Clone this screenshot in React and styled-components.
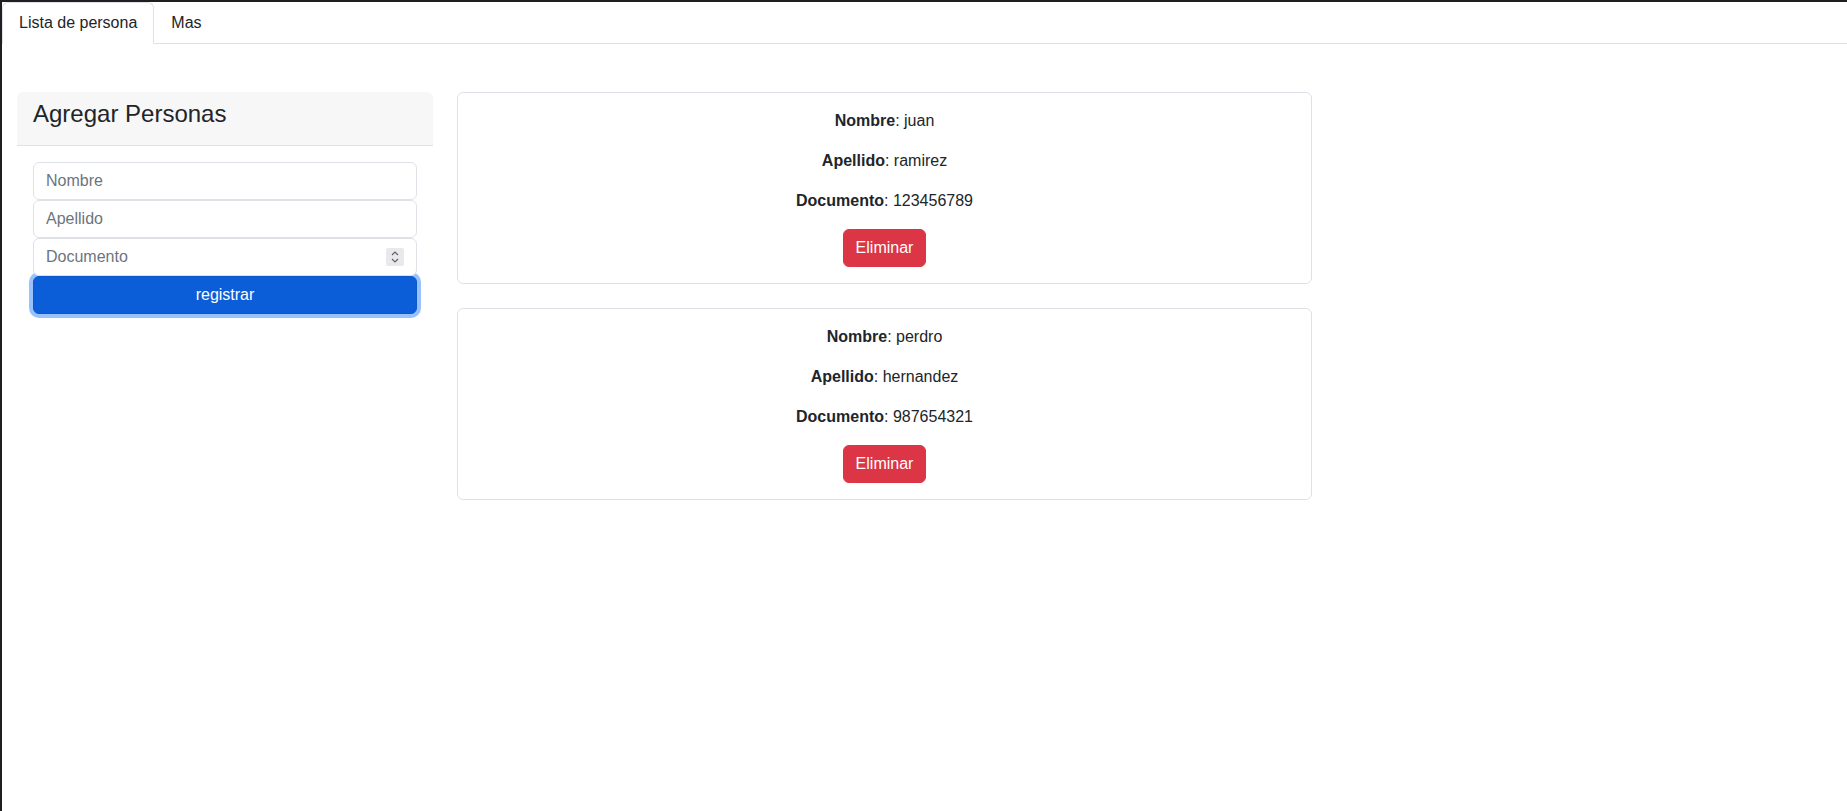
import styled, { createGlobalStyle } from 'styled-components'

const GlobalStyle = createGlobalStyle`
  * { box-sizing: border-box; }
  body {
    margin: 0;
    font-family: "Liberation Sans", Arial, sans-serif;
    font-size: 16px;
    line-height: 1.5;
    color: #212529;
    background: #fff;
    border-top: 2px solid #1f1f1f;
    border-left: 2px solid #1f1f1f;
    min-height: 811px;
  }
`

const personas = [
  { nombre: 'juan', apellido: 'ramirez', documento: '123456789' },
  { nombre: 'perdro', apellido: 'hernandez', documento: '987654321' },
]

const App = () => {
  return (
    <>
      <GlobalStyle />
      <NavTabs>
        <Tab active>Lista de persona</Tab>
        <Tab>Mas</Tab>
      </NavTabs>
      <Content>
        <FormCard>
          <CardHeader>
            <h4>Agregar Personas</h4>
          </CardHeader>
          <FormBody>
            <Input type="text" placeholder="Nombre" />
            <Input type="text" placeholder="Apellido" />
            <NumberWrap>
              <Input type="number" placeholder="Documento" />
              <Spinner>
                <svg width="10" height="14" viewBox="0 0 10 14" fill="none" stroke="#5f6368" strokeWidth="1.2">
                  <path d="M2 5 L5 2 L8 5" />
                  <path d="M2 9 L5 12 L8 9" />
                </svg>
              </Spinner>
            </NumberWrap>
            <PrimaryButton>registrar</PrimaryButton>
          </FormBody>
        </FormCard>
        <List>
          {personas.map((p) => (
            <PersonCard key={p.documento}>
              <p><b>Nombre</b>: {p.nombre}</p>
              <p><b>Apellido</b>: {p.apellido}</p>
              <p><b>Documento</b>: {p.documento}</p>
              <DangerButton>Eliminar</DangerButton>
            </PersonCard>
          ))}
        </List>
      </Content>
    </>
  )
}

export default App

const NavTabs = styled.div`
  display: flex;
  border-bottom: 1px solid #dee2e6;
`

const Tab = styled.div`
  padding: 8px 16px;
  margin-bottom: -1px;
  border: 1px solid transparent;
  border-top-left-radius: 6px;
  border-top-right-radius: 6px;
  color: #212529;
  cursor: pointer;
  ${(p) => p.active && `
    background: #fff;
    border-color: #dee2e6 #dee2e6 #fff;
  `}
`

const Content = styled.div`
  display: flex;
  align-items: flex-start;
  gap: 24px;
  padding: 48px 0 0 15px;
`

const FormCard = styled.div`
  width: 416px;
  border-radius: 6px;
  background: #fff;
`

const CardHeader = styled.div`
  background: #f7f7f7;
  border-bottom: 1px solid #dee2e6;
  padding: 8px 16px;
  border-radius: 6px 6px 0 0;
  & h4 {
    margin: 0 0 8px;
    font-size: 24px;
    font-weight: 500;
    line-height: 1.2;
  }
`

const FormBody = styled.div`
  padding: 16px;
  display: flex;
  flex-direction: column;
`

const Input = styled.input`
  display: block;
  width: 100%;
  height: 38px;
  padding: 6px 12px;
  font-family: inherit;
  font-size: 16px;
  color: #212529;
  border: 1px solid #dee2e6;
  border-radius: 6px;
  outline: none;
  &::placeholder {
    color: #6c757d;
  }
  &::-webkit-outer-spin-button,
  &::-webkit-inner-spin-button {
    -webkit-appearance: none;
    margin: 0;
  }
  -moz-appearance: textfield;
`

const NumberWrap = styled.div`
  position: relative;
`

const Spinner = styled.span`
  position: absolute;
  right: 13px;
  top: 10px;
  width: 18px;
  height: 18px;
  background: #e9e9ed;
  border-radius: 2px;
  display: flex;
  align-items: center;
  justify-content: center;
`

const PrimaryButton = styled.button`
  width: 100%;
  height: 38px;
  font-family: inherit;
  font-size: 16px;
  color: #fff;
  background: #0b5ed7;
  border: 1px solid #0a58ca;
  border-radius: 6px;
  box-shadow: 0 0 0 4px rgba(49, 132, 253, 0.5);
  cursor: pointer;
`

const List = styled.div`
  width: 855px;
  display: flex;
  flex-direction: column;
  gap: 24px;
`

const PersonCard = styled.div`
  border: 1px solid #dee2e6;
  border-radius: 6px;
  padding: 16px;
  text-align: center;
  & p {
    margin: 0 0 16px;
  }
  & b {
    font-weight: 700;
  }
`

const DangerButton = styled.button`
  height: 38px;
  padding: 6px 12px;
  font-family: inherit;
  font-size: 16px;
  color: #fff;
  background: #dc3545;
  border: 1px solid #dc3545;
  border-radius: 6px;
  cursor: pointer;
`
